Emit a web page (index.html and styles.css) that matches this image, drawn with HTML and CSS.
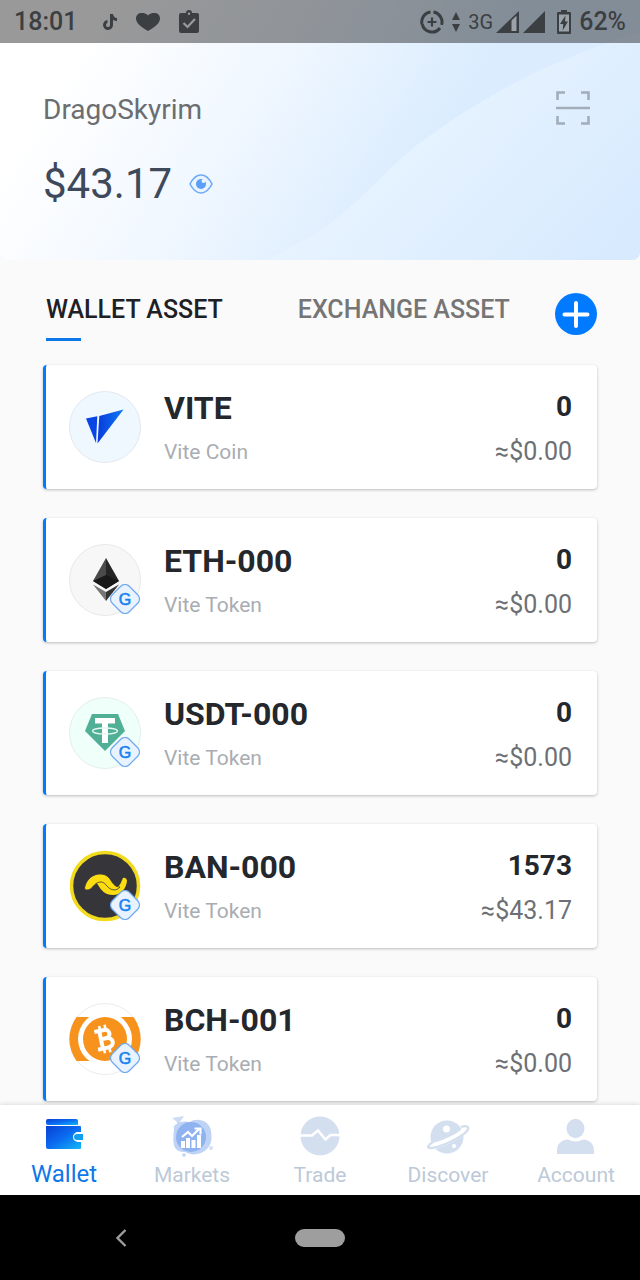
FILE: index.html
```html
<!DOCTYPE html>
<html lang="en">
<head>
  <meta charset="UTF-8" />
  <meta name="viewport" content="width=device-width, initial-scale=1.0"/>
  <title>Wallet</title>
  <link rel="stylesheet" href="styles.css">
</head>
<body>

  <!-- Shared shapes -->
  <svg class="defs" width="0" height="0" aria-hidden="true">
    <defs>
      <linearGradient id="blue" x1="0" y1="0" x2="1" y2="1">
        <stop offset="0" stop-color="#0a3fd6"/>
        <stop offset="0.5" stop-color="#0a6cf0"/>
        <stop offset="1" stop-color="#12b8f5"/>
      </linearGradient>
      <linearGradient id="vite" x1="0" y1="0" x2="1" y2="0">
        <stop offset="0" stop-color="#0a3bdc"/>
        <stop offset="1" stop-color="#0b78f2"/>
      </linearGradient>
      <symbol id="gateway" viewBox="0 0 30 30">
        <rect x="3" y="3" width="24" height="24" rx="6" transform="rotate(45 15 15)" fill="#e9f3ff" stroke="#6fa8ee" stroke-width="1.2"/>
        <text x="15" y="20.500" text-anchor="middle" class="gateway-letter">G</text>
      </symbol>
    </defs>
  </svg>

  <header class="hero">
    <svg class="hero-bg" viewBox="0 0 640 260" preserveAspectRatio="none" aria-hidden="true">
      <defs>
        <linearGradient id="sky" gradientUnits="userSpaceOnUse" x1="70" y1="60" x2="370" y2="250">
          <stop offset="0" stop-color="#ffffff"/>
          <stop offset="0.5" stop-color="#f0f7ff"/>
          <stop offset="1" stop-color="#daecfe"/>
        </linearGradient>
        <linearGradient id="wave" gradientUnits="userSpaceOnUse" x1="400" y1="120" x2="580" y2="290">
          <stop offset="0" stop-color="#e7f3ff"/>
          <stop offset="1" stop-color="#d7eafe"/>
        </linearGradient>
      </defs>
      <rect width="640" height="260" fill="url(#sky)"/>
      <path d="M264 260C350 225 372 178 425 139C490 92 560 55 640 33V260Z" fill="url(#wave)"/>
    </svg>

    <div class="status-bar">
      <div class="status-left">
        <span class="clock">18:01</span>
        <svg width="16" height="18" viewBox="0 0 16 18"><path d="M8 1h3c.3 2.400 1.600 3.800 4 4v3c-1.500 0-2.800-.4-4-1.200V12a5 5 0 1 1-5.500-5v3.100A2 2 0 1 0 8 12z" fill="currentColor"/></svg>
        <svg class="heart" width="26" height="20" viewBox="0 0 26 20"><path d="M13 19C6 15 1 11 1 6.500 1 3 3.500 1 6.500 1 9 1 11.500 1.500 13 3.500 14.500 1.500 17 1 19.500 1 22.500 1 25 3 25 6.500 25 11 20 15 13 19z" fill="currentColor"/></svg>
        <svg width="22" height="24" viewBox="0 0 22 24"><path d="M3 3h5a3 3 0 0 1 6 0h5a2 2 0 0 1 2 2v16a2 2 0 0 1-2 2H3a2 2 0 0 1-2-2V5a2 2 0 0 1 2-2z" fill="currentColor"/><circle cx="11" cy="3.800" r="1.200" fill="#999"/><path d="M5.500 13l4 4 7.500-8" fill="none" stroke="#999" stroke-width="2.200"/></svg>
      </div>
      <div class="status-right">
        <svg width="24" height="24" viewBox="0 0 24 24" fill="none" stroke="currentColor" stroke-width="3"><path d="M13.500 2.100A10 10 0 0 1 21.600 14.800M20 18A10 10 0 0 1 2.200 14M1.900 14A10 10 0 0 1 10.500 2.100"/><path d="M12 7.500v9M7.500 12h9" stroke-width="2.200"/></svg>
        <svg class="arrows" width="8" height="20" viewBox="0 0 8 20"><path d="M4 0l4 8H0zM4 20l-4-8h8z" fill="currentColor"/></svg>
        <span class="network">3G</span>
        <svg class="signal" width="23" height="22" viewBox="0 0 23 22"><path d="M0 22L23 0v22z" fill="currentColor"/><path d="M15.500 9.500l5-4.800V20h-5z" fill="#9aa2aa"/></svg>
        <svg class="signal" width="22" height="22" viewBox="0 0 22 22"><path d="M0 22L22 0v22z" fill="currentColor"/></svg>
        <svg class="battery" width="14" height="24" viewBox="0 0 14 24"><path d="M4 0h6v2h3a1 1 0 0 1 1 1v20a1 1 0 0 1-1 1H1a1 1 0 0 1-1-1V3a1 1 0 0 1 1-1h3z" fill="currentColor"/><path d="M2 4.500h10v17H2z" fill="#9aa2aa"/><path d="M8.500 5.500L3 14h3.200L5.700 20.500 11 11.500H8z" fill="currentColor"/></svg>
        <span class="percent">62%</span>
      </div>
    </div>

    <div class="account">
      <div>
        <h1 class="account-name">DragoSkyrim</h1>
        <div class="balance">
          <span>$43.17</span>
          <button class="icon-btn" aria-label="Hide balance">
            <svg width="24" height="20" viewBox="0 0 24 20"><path d="M1 10C4 4 8 1 12 1s8 3 11 9c-3 6-7 9-11 9S4 16 1 10z" fill="#eaf4ff" stroke="#6fabf8" stroke-width="1.600"/><circle cx="12" cy="10" r="5" fill="#5b9ef8"/><circle cx="14.500" cy="7" r="2" fill="#eaf4ff"/></svg>
          </button>
        </div>
      </div>
      <button class="icon-btn scan" aria-label="Scan">
        <svg width="34" height="34" viewBox="0 0 34 34" fill="none" stroke="#a3adb9" stroke-width="2.600"><path d="M9 1.500H1.500V9M25 1.500h7.500V9M9 32.500H1.500V25M25 32.500h7.500V25M0 17h34"/></svg>
      </button>
    </div>
  </header>

  <main>
    <div class="asset-head">
      <nav class="asset-tabs">
        <button class="asset-tab active">WALLET ASSET</button>
        <button class="asset-tab">EXCHANGE ASSET</button>
      </nav>
      <button class="icon-btn" aria-label="Add asset">
        <svg width="42" height="42" viewBox="0 0 42 42"><circle cx="21" cy="21" r="21" fill="#007aff"/><path d="M21 10v23M9.500 21.500h23" stroke="#fff" stroke-width="4" stroke-linecap="round"/></svg>
      </button>
    </div>

    <ul class="assets">
      <li class="asset">
        <svg class="coin" viewBox="0 0 72 72">
          <circle cx="36" cy="36" r="35.500" fill="#eff7ff" stroke="#e3e8ef"/>
          <path d="M17 27.500l11.300-2.200L27 52z" fill="#0a45e4"/>
          <path d="M30.300 25L54.500 18.500 28.500 52.500z" fill="url(#vite)"/>
        </svg>
        <div class="asset-info"><h2>VITE</h2><p>Vite Coin</p></div>
        <div class="asset-value"><strong>0</strong><span>≈$0.00</span></div>
      </li>

      <li class="asset">
        <svg class="coin" viewBox="0 0 72 72">
          <circle cx="36" cy="36" r="35.500" fill="#f7f7f7" stroke="#e8e8e8"/>
          <path d="M37 14L24 37l13 8z" fill="#4a4a4a"/>
          <path d="M37 14l13 23-13 8z" fill="#252525"/>
          <path d="M37 31L24 37l13 8 13-8z" fill="#191919"/>
          <path d="M24 40.500l13 7.500v9z" fill="#777"/>
          <path d="M50 40.500L37 48v9z" fill="#343434"/>
          <use href="#gateway" x="41" y="40" width="30" height="30"/>
        </svg>
        <div class="asset-info"><h2>ETH-000</h2><p>Vite Token</p></div>
        <div class="asset-value"><strong>0</strong><span>≈$0.00</span></div>
      </li>

      <li class="asset">
        <svg class="coin" viewBox="0 0 72 72">
          <circle cx="36" cy="36" r="35.500" fill="#effffa" stroke="#e3efec"/>
          <path d="M23 17h26l7 17-20 20-20-20z" fill="#50af95"/>
          <path d="M26 21h20v5.500h-7V46h-6V26.500h-7z" fill="#fff"/>
          <ellipse cx="36" cy="34" rx="12.500" ry="3" fill="none" stroke="#e6f7f2" stroke-width="1.300"/>
          <use href="#gateway" x="41" y="40" width="30" height="30"/>
        </svg>
        <div class="asset-info"><h2>USDT-000</h2><p>Vite Token</p></div>
        <div class="asset-value"><strong>0</strong><span>≈$0.00</span></div>
      </li>

      <li class="asset">
        <svg class="coin" viewBox="0 0 72 72">
          <circle cx="36" cy="36" r="33.500" fill="#35353a" stroke="#f2da1d" stroke-width="3.500"/>
          <path d="M54 28c2-1 4 1 4 3-1 8-6 14-14 14-8 0-12-5-15-10-1-2-3-3-5-2 2-4 8-5 12 0 3 4 6 6 10 5 5-1 6-6 8-10z" fill="#fbdd11"/>
          <path d="M18 40c-2 0-3-1-2-4 2-7 8-12 15-12 6 0 9 3 12 8 2 3 4 5 8 5-3 4-9 4-13-1-3-4-6-5-10-3-4 2-5 7-10 7z" fill="#fbdd11" stroke="#35353a" stroke-width="0.800"/>
          <use href="#gateway" x="41" y="40" width="30" height="30"/>
        </svg>
        <div class="asset-info"><h2>BAN-000</h2><p>Vite Token</p></div>
        <div class="asset-value"><strong>1573</strong><span>≈$43.17</span></div>
      </li>

      <li class="asset">
        <svg class="coin" viewBox="0 0 72 72">
          <circle cx="36" cy="36" r="35.500" fill="#fff" stroke="#ececec"/>
          <path d="M7.500 14h57C74 28 74 44 64.500 58h-57C-2 44-2 28 7.500 14z" fill="#f7931c"/>
          <circle cx="36" cy="36" r="27" fill="#fff"/>
          <circle cx="36" cy="36" r="22" fill="#f7931c"/>
          <g transform="rotate(-12 36 36)" fill="none" stroke="#fff">
            <path d="M32 27v18M27 27h10c6 0 6 8.500 0 8.500h-5M37 35.500c8 0 8 9.500 0 9.500H27" stroke-width="4"/>
            <path d="M33 22v4M38.500 22v4M33 46v4M38.500 46v4" stroke-width="2.600"/>
          </g>
          <use href="#gateway" x="41" y="40" width="30" height="30"/>
        </svg>
        <div class="asset-info"><h2>BCH-001</h2><p>Vite Token</p></div>
        <div class="asset-value"><strong>0</strong><span>≈$0.00</span></div>
      </li>
    </ul>
  </main>

  <nav class="tab-bar">
    <a class="tab active" href="#wallet">
      <svg width="44" height="44" viewBox="0 0 44 44"><path d="M6 6h28a2 2 0 0 1 2 2v4H6a2 2 0 0 1-2-2V8a2 2 0 0 1 2-2z" fill="url(#blue)"/><path d="M4 13h34a1 1 0 0 1 1 1v5h-3a5 5 0 0 0 0 10h3v6a1 1 0 0 1-1 1H6a2 2 0 0 1-2-2z" fill="url(#blue)"/><path d="M41 21v6h-6a3 3 0 0 1 0-6z" fill="#12a0ee"/></svg>
      <span>Wallet</span>
    </a>
    <a class="tab" href="#markets">
      <svg width="44" height="44" viewBox="0 0 44 44"><path d="M2 5l12-2-6 9-1.500-3.500zM3 14l3-3v4z" fill="#ccdcf3"/><path d="M4 17C3 10 12 7 20 9 26 4 40 7 41 18c1 7 1 13-4 18-6 6-15 7-22 3C4 39 2 32 4 17z" fill="#bfd3f6"/><circle cx="21" cy="24" r="15" fill="#8fb2f0"/><circle cx="14" cy="42" r="1.800" fill="#bfd3f6"/><circle cx="41" cy="35" r="2" fill="#d3e0f6"/><path d="M11 28h4v7h-4zM16 25h4v10h-4zM21.500 27h4v8h-4zM27 22h4v13h-4z" fill="#fff"/><path d="M12 24l6-5 4 4 7-7M24.500 15.500h6v6" fill="none" stroke="#fff" stroke-width="2.200"/></svg>
      <span>Markets</span>
    </a>
    <a class="tab" href="#trade">
      <svg width="44" height="44" viewBox="0 0 44 44"><circle cx="22" cy="23" r="19.500" fill="#d3dfef"/><path d="M2 22.500h12l6-5 7.500 9 5-4.500h12" fill="none" stroke="#fff" stroke-width="2.600"/></svg>
      <span>Trade</span>
    </a>
    <a class="tab" href="#discover">
      <svg width="44" height="44" viewBox="0 0 44 44"><circle cx="21" cy="24" r="16.500" fill="#d3dfef"/><path d="M3 33c6 2 36-11 37-19" fill="none" stroke="#fff" stroke-width="6"/><path d="M7 29C2 32 0 35 5 35c9 0 31-11 36-17 3-4 0-6-6-4" fill="none" stroke="#d3dfef" stroke-width="2.400"/><circle cx="20.500" cy="16" r="3.500" fill="#fff"/><circle cx="28" cy="33" r="2" fill="#fff"/></svg>
      <span>Discover</span>
    </a>
    <a class="tab" href="#account">
      <svg width="44" height="44" viewBox="0 0 44 44"><ellipse cx="21.500" cy="15.500" rx="9" ry="9.700" fill="#d3dfef"/><path d="M3 41v-3c0-7 4-11 11-11.500 5 2.500 10 2.500 15 0 7 .5 11 4.500 11 11.500v3z" fill="#d3dfef"/></svg>
      <span>Account</span>
    </a>
  </nav>

  <div class="system-nav">
    <button class="icon-btn back" aria-label="Back">
      <svg width="12" height="18" viewBox="0 0 12 18"><path d="M10.500 1L2.500 9l8 8" fill="none" stroke="#9e9e9e" stroke-width="2.400"/></svg>
    </button>
    <button class="home" aria-label="Home"></button>
  </div>

</body>
</html>
```

FILE: styles.css
```css
* {
  box-sizing: border-box;
}

body {
  display: flex;
  flex-direction: column;
  min-height: 100vh;
  margin: 0;
  font-family: Roboto, "Liberation Sans", sans-serif;
  background: #fafafa;
}

h1, h2, p, ul {
  margin: 0;
  padding: 0;
}

svg {
  display: block;
  flex-shrink: 0;
}

button {
  padding: 0;
  border: none;
  background: none;
  font-family: inherit;
  cursor: pointer;
}

.defs {
  position: absolute;
}

.gateway-letter {
  font-family: "Liberation Sans", sans-serif;
  font-size: 16px;
  fill: #1a82ee;
  stroke: #1a82ee;
  stroke-width: 0.6px;
}

/* Header */
.hero {
  position: relative;
  padding-bottom: 52px;
  border-radius: 0 0 8px 8px;
  overflow: hidden;
}

.hero-bg {
  position: absolute;
  inset: 0;
  width: 100%;
  height: 100%;
  z-index: -1;
}

.status-bar {
  display: flex;
  justify-content: space-between;
  height: 43px;
  padding: 0 14px;
  background: rgba(0, 0, 0, 0.4);
  color: #3c3f42;
  font-size: 25px;
  font-weight: 500;
}

.status-left, .status-right {
  display: flex;
  align-items: center;
}

.status-left {
  gap: 25px;
}

.heart {
  margin: 0 -8px;
}

.network {
  margin: 0 3px 0 8px;
  font-size: 20px;
  font-weight: 400;
}

.arrows {
  margin-left: 8px;
}

.signal {
  margin-right: 4px;
}

.battery {
  margin: 0 8px;
}

.account {
  display: flex;
  justify-content: space-between;
  align-items: flex-start;
  padding: 48px 50px 0 43px;
}

.account-name {
  margin-top: 1px;
  font-size: 28px;
  font-weight: 400;
  line-height: 36px;
  color: #6b6d70;
}

.balance {
  display: flex;
  align-items: center;
  gap: 17px;
  margin-top: 32px;
  font-size: 42px;
  line-height: 48px;
  color: #3e4a5b;
}

/* Asset list */
main {
  flex: 1;
  padding: 33px 43px 4px;
}

.asset-head {
  display: flex;
  justify-content: space-between;
  align-items: flex-start;
  height: 48px;
  padding-left: 3px;
}

.asset-tabs {
  display: flex;
  align-items: flex-start;
  gap: 75px;
}

.asset-tab {
  font-size: 25px;
  font-weight: 500;
  line-height: 34px;
  color: #757575;
}

.asset-tab.active {
  color: #1d2024;
}

.asset-tab.active::after {
  content: "";
  display: block;
  width: 35px;
  height: 3px;
  margin-top: 11px;
  background: #0f78e8;
}

.assets {
  display: flex;
  flex-direction: column;
  gap: 29px;
  margin-top: 24px;
  list-style: none;
}

.asset {
  display: flex;
  align-items: center;
  height: 124px;
  padding: 0 25px 0 23px;
  border-left: 3px solid #007aff;
  border-radius: 4px;
  background: #fff;
  box-shadow: 0 1px 3px rgba(0, 0, 0, 0.25);
}

.coin {
  width: 72px;
  height: 72px;
}

.asset-info {
  flex: 1;
  margin-left: 23px;
}

.asset-info h2 {
  font-size: 32px;
  font-weight: 700;
  line-height: 38px;
  color: #24272b;
}

.asset-info p {
  margin-top: 12px;
  font-size: 21px;
  line-height: 26px;
  color: #a9adb2;
}

.asset-value {
  display: flex;
  flex-direction: column;
  gap: 12px;
  padding-top: 3px;
  text-align: right;
}

.asset-value strong {
  font-size: 28px;
  line-height: 34px;
  color: #24272b;
}

.asset-value span {
  font-size: 25px;
  line-height: 32px;
  color: #6c7075;
}

/* Bottom tabs */
.tab-bar {
  display: flex;
  height: 90px;
  background: #fff;
  box-shadow: 0 -1px 4px rgba(0, 0, 0, 0.12);
}

.tab {
  flex: 1;
  display: flex;
  flex-direction: column;
  align-items: center;
  padding-top: 8px;
  font-size: 21px;
  line-height: 36px;
  color: #bcc9d8;
  text-decoration: none;
}

.tab.active {
  font-size: 24px;
  line-height: 34px;
  color: #0f78e8;
}

.system-nav {
  display: flex;
  align-items: center;
  justify-content: center;
  position: relative;
  height: 85px;
  background: #000;
}

.back {
  position: absolute;
  left: 18%;
}

.home {
  width: 50px;
  height: 18px;
  border-radius: 9px;
  background: #9e9e9e;
}
```
